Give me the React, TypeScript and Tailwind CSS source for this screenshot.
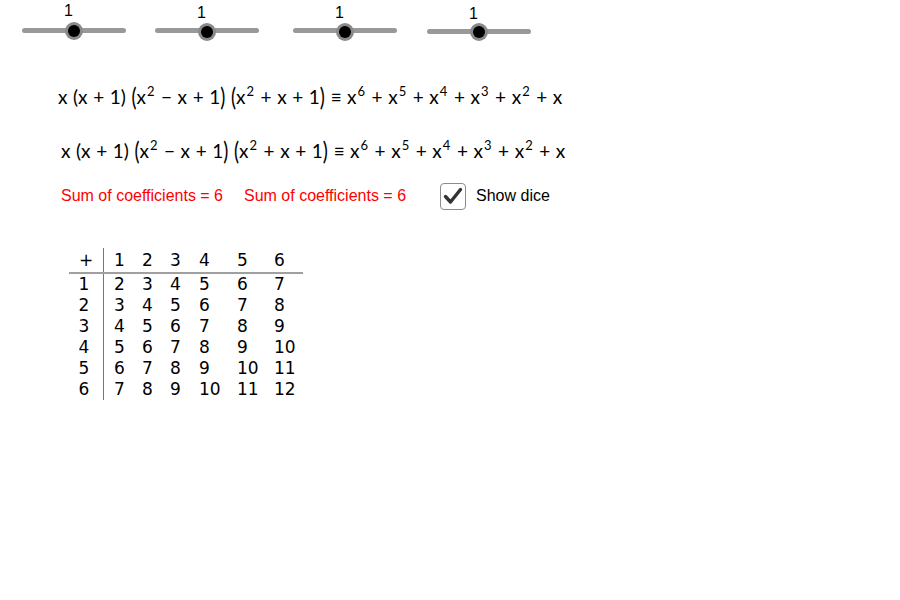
import React from "react";

const sliders = [
  { ml: "ml-[22px]", mt: "mt-[0px]" },
  { ml: "ml-[29px]", mt: "mt-[2px]" },
  { ml: "ml-[34px]", mt: "mt-[2px]" },
  { ml: "ml-[30px]", mt: "mt-[3px]" },
];

function Slider({ ml, mt }: { ml: string; mt: string }) {
  return (
    <div className={`${ml} ${mt} w-[104px] flex flex-col`}>
      <div className="h-[27px] pl-[42px] text-[16px] leading-[16px] text-black">1</div>
      <div className="relative h-[10px] flex items-center">
        <div className="w-full h-[5px] rounded-full bg-[#999999]" />
        <div className="absolute left-[43px] top-[-4px] w-[18px] h-[18px] rounded-full bg-[#8a8a8a] flex items-center justify-center">
          <div className="w-[12px] h-[12px] rounded-full bg-black" />
        </div>
      </div>
    </div>
  );
}

function Sup({ n }: { n: string }) {
  return <span className="text-[13px] leading-none relative -top-[8px] ml-[1px] mr-[1px]">{n}</span>;
}

function BigParen({ c }: { c: string }) {
  return <span className="inline-block leading-none scale-y-[1.3] origin-center">{c}</span>;
}

function Formula({ cls }: { cls: string }) {
  return (
    <div
      className={`${cls} h-[24px] whitespace-nowrap text-[19px] leading-[24px] text-black [word-spacing:0.7px]`}
      style={{ fontFamily: "Lato, sans-serif" }}
    >
      <span>x (x + 1) </span>
      <BigParen c="(" />
      <span>x</span>
      <Sup n="2" />
      <span> − x + 1</span>
      <BigParen c=")" />
      <span> </span>
      <BigParen c="(" />
      <span>x</span>
      <Sup n="2" />
      <span> + x + 1</span>
      <BigParen c=")" />
      <span> ≡ x</span>
      <Sup n="6" />
      <span> + x</span>
      <Sup n="5" />
      <span> + x</span>
      <Sup n="4" />
      <span> + x</span>
      <Sup n="3" />
      <span> + x</span>
      <Sup n="2" />
      <span> + x</span>
    </div>
  );
}

const header = ["1", "2", "3", "4", "5", "6"];
const rows = [1, 2, 3, 4, 5, 6];

export default function App() {
  return (
    <div className="w-[900px] h-[600px] bg-white overflow-hidden" style={{ fontFamily: "'Liberation Sans', Arial, sans-serif" }}>
      <div className="flex pt-[3px] h-[35px]">
        {sliders.map((s, i) => (
          <Slider key={i} ml={s.ml} mt={s.mt} />
        ))}
      </div>

      <Formula cls="ml-[58px] mt-[50px]" />
      <Formula cls="ml-[61px] mt-[30px]" />

      <div className="flex items-center mt-[19px] h-[28px] text-[16px] leading-[28px]">
        <span className="ml-[61px] text-[#ff0000]">Sum of coefficients = 6</span>
        <span className="ml-[21px] text-[#ff0000]">Sum of coefficients = 6</span>
        <div className="ml-[34px] w-[26px] h-[27px] rounded-[4px] border-[1.5px] border-[#8c8c8c] flex items-center justify-center">
          <svg width="20" height="18" viewBox="0 0 20 18">
            <path d="M2.5 9.5 L7.5 15 L17.5 2.5" fill="none" stroke="#333333" strokeWidth="3.4" strokeLinecap="round" strokeLinejoin="round" />
          </svg>
        </div>
        <span className="ml-[10px] text-black">Show dice</span>
      </div>

      <div
        className="ml-[69px] mt-[38px] w-[234px] text-[17px] text-black"
        style={{ fontFamily: "'DejaVu Sans', sans-serif" }}
      >
        <div className="grid grid-cols-[34px_39px_28px_29px_38px_37px_29px] h-[26px] border-b-2 border-[#a0a0a0] items-end leading-[24px]">
          <div className="text-center">+</div>
          <div className="border-l border-[#777777] h-full flex items-end pl-[10px]">{header[0]}</div>
          {header.slice(1).map((h) => (
            <div key={h}>{h}</div>
          ))}
        </div>
        {rows.map((r) => (
          <div key={r} className="grid grid-cols-[34px_39px_28px_29px_38px_37px_29px] h-[21px] leading-[21px]">
            <div className="text-center pr-[4px]">{r}</div>
            <div className="border-l border-[#777777] pl-[10px]">{r + 1}</div>
            {header.slice(1).map((h) => (
              <div key={h}>{r + Number(h)}</div>
            ))}
          </div>
        ))}
      </div>
    </div>
  );
}
